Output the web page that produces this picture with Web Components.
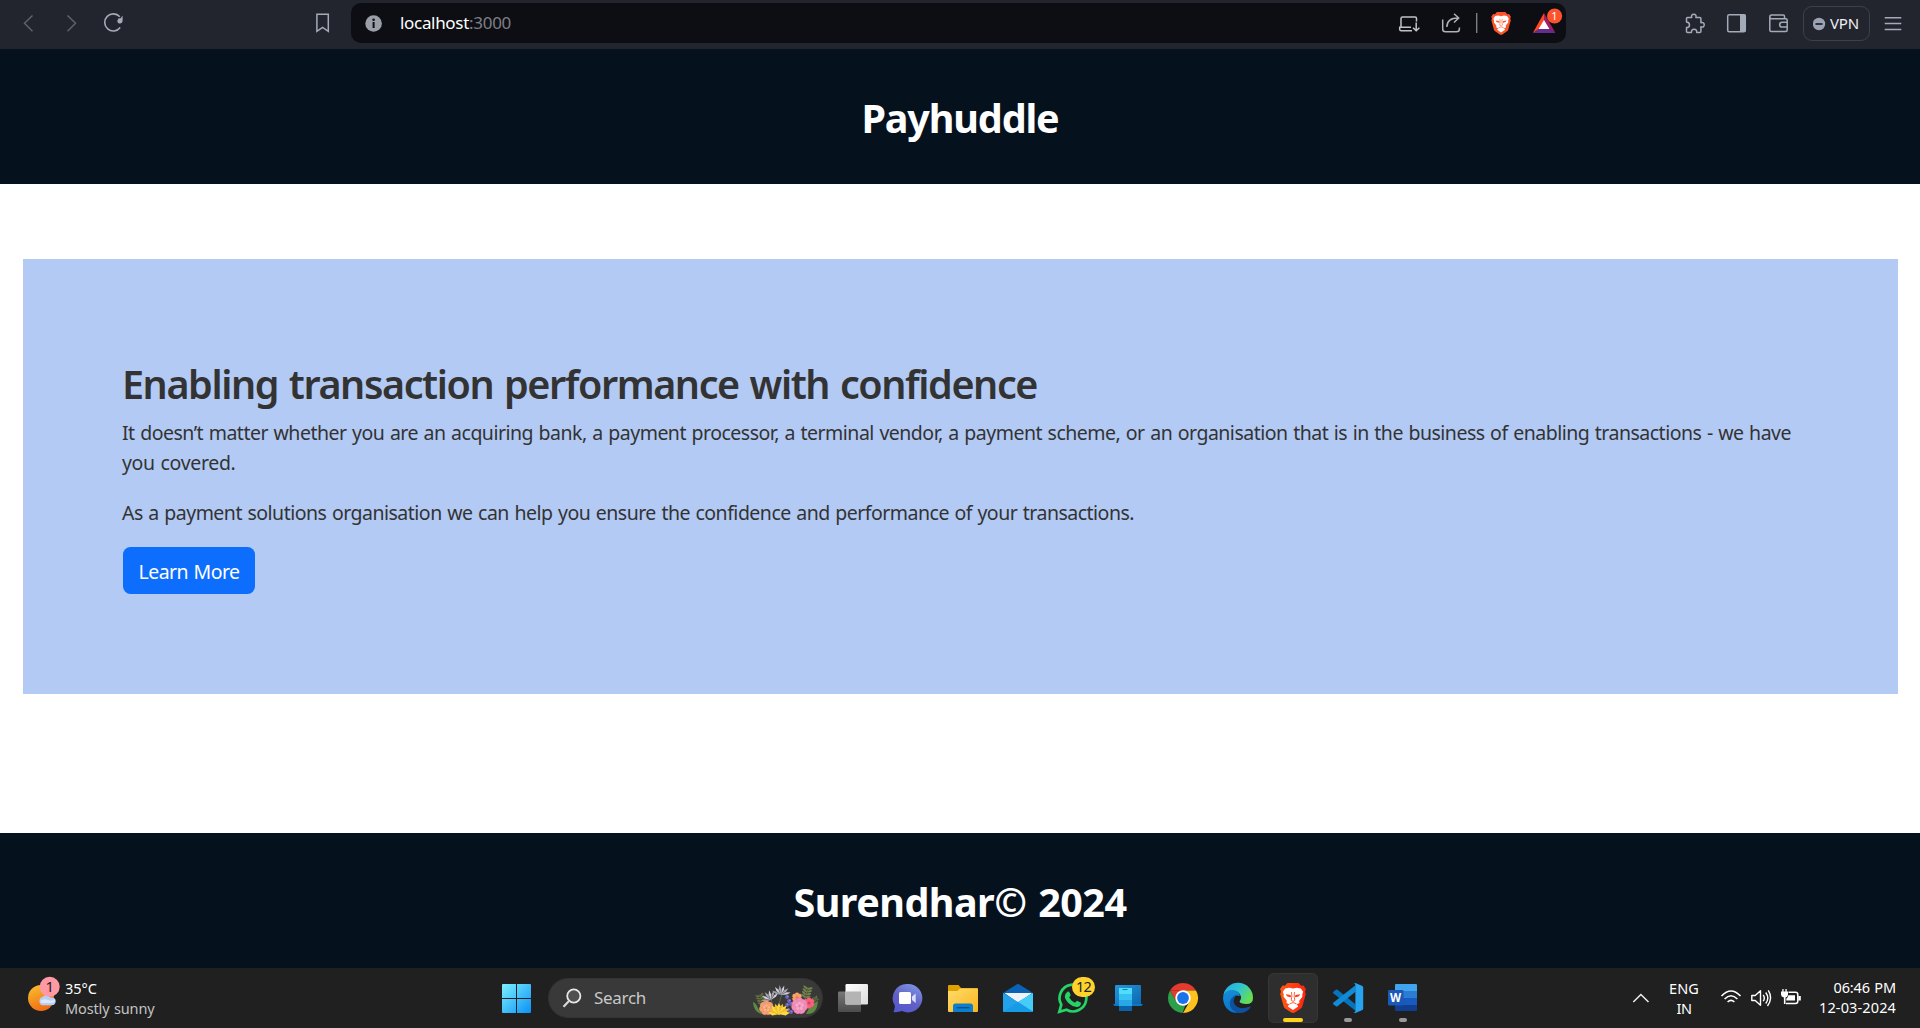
<!DOCTYPE html>
<html lang="en">
<head>
<meta charset="utf-8">
<title>Payhuddle</title>
<style>
html,body{margin:0;height:100%}
body{font-family:"Noto Sans","Open Sans",sans-serif;background:#fff;overflow:hidden}
</style>
</head>
<body>
<desktop-screen></desktop-screen>
<script>
const define = (name, markup, after) => customElements.define(name, class extends HTMLElement {
  connectedCallback() {
    if (this.shadowRoot) return;
    const t = document.createElement('template');
    t.innerHTML = typeof markup === 'function' ? markup(this) : markup;
    this.attachShadow({mode: 'open'}).append(t.content.cloneNode(true));
    if (after) after(this);
  }
});
// An icon cell: x and w give the cell's slice of the bar, y and h its rows.
const cell = (x, y, w, h, body) =>
  `<svg width="${w}" height="${h}" viewBox="${x} ${y} ${w} ${h}" fill="none" aria-hidden="true">${body}</svg>`;

const shield = 'M7.5 0h11l2.6 2.8 2.4-.3 2.4 3.6-.9 2.6.8 2.3-3.4 12.3q-.4 1.3-1.6 2.1l-5.6 3.9q-2.2 1.4-4.4 0l-5.6-3.9q-1.2-.8-1.6-2.1L.2 11l.8-2.3-.9-2.6L2.5 2.5l2.4.3z';
const face = 'M5.2 5.4l4-.7 3.800.9 3.800-.9 4 .7 2.400 3.400-.9 2.400.1 2.600-3.200 4 .3 2.300-2.600 1.200 1.300 2.200-5.200 3.600-5.200-3.600 1.300-2.200-2.600-1.200.3-2.300-3.200-4 .1-2.600-.9-2.400z';
const lion = (x, y, s, fill, line = fill) => `<g transform="translate(${x} ${y}) scale(${s})">
 <path d="${shield}" fill="${fill}"/><path d="${face}" fill="#fff"/>
 <path d="M5.800 11.300l4.600.7.8 1.500-1 .8-3.200-1zM20.200 11.300l-4.600.7-.8 1.500 1 .8 3.200-1z" fill="${line}"/>
 <path d="M11.500 9l.4 4-.7 4.200 1.800 1.300 1.800-1.300-.7-4.200.4-4M9.400 21l3.600-1.500 3.600 1.500" stroke="${line}" stroke-width=".8"/></g>`;

define('icon-back', `<style>:host{display:block}svg{display:block}</style>` +
  cell(22,0,13,49,`<path d="M32.500 15.500L24.500 23.300L32.500 31.200" stroke="#5d626c" stroke-width="1.500"/>`));
define('icon-forward', `<style>:host{display:block}svg{display:block}</style>` +
  cell(65,0,13,49,`<path d="M67.500 15.500L75.500 23.300L67.500 31.200" stroke="#5d626c" stroke-width="1.500"/>`));
define('icon-reload', `<style>:host{display:block}svg{display:block}</style>` +
  cell(103,0,22,49,`<path d="M119.800 16.800A8.600 8.600 0 1 0 120.200 27.600" stroke="#a3aab8" stroke-width="1.600"/><path d="M122.600 15.500v5.500a2.600 2.600 0 1 1-2-2.700z" fill="#a3aab8"/>`));
define('icon-bookmark', `<style>:host{display:block}svg{display:block}</style>` +
  cell(315,0,15,49,`<path d="M316.900 14.300h11.400v17l-5.700-4-5.700 4z" stroke="#a3aab8" stroke-width="1.500"/>`));

define('address-bar', `<style>
:host{display:flex;align-items:center;width:1215px;height:40px;background:#0d0e13;border-radius:10px;box-sizing:border-box}
svg{display:block;flex:none}
.url{margin-left:18px;font-size:17px;line-height:40px;height:40px;color:#fff;display:flex}
.port{color:#7d7f85}
.tools{margin-left:auto;display:flex}
.badge{font-size:11px;fill:#fff}
</style>
${cell(351,3,31,40,`<circle cx="373.600" cy="23.500" r="8.300" fill="#9b9ea6"/><circle cx="373.600" cy="19.800" r="1.300" fill="#0d0e13"/><path d="M373.600 22v6" stroke="#0d0e13" stroke-width="2"/>`)}
<div class="url"><fit-text w="69">localhost</fit-text><fit-text w="42" class="port">:3000</fit-text></div>
<div class="tools">
${cell(1390,3,40,40,`<path d="M1412 30.700h-10.800q-1.500 0-1.500-1.500v-2h11.300M1401 27v-8.500q0-1.500 1.500-1.500h12.500q1.500 0 1.500 1.500v3M1416.200 22.500v8M1413 27.700l3.200 3.100 3.200-3.100" stroke="#c0c2c7" stroke-width="1.500"/>`)}
${cell(1430,3,40,40,`<path d="M1442.700 19.500v9.500q0 2.800 2.800 2.800h11q2.900 0 2.900-2.800v-1.500" stroke="#b0b2b8" stroke-width="1.500"/><path d="M1446.800 27q.2-9 11.300-9M1454 13.800l4.700 4.200-4.700 4.500" stroke="#b0b2b8" stroke-width="1.500"/>`)}
${cell(1470,3,14,40,`<path d="M1476.700 13v20" stroke="#85878d" stroke-width="1.300"/>`)}
${cell(1484,3,40,40,lion(1491.200,12,.76,'#fb542b'))}
${cell(1524,3,42,40,`<path d="M1544 13L1532.800 33l11.200-7z" fill="#ff4724"/><path d="M1544 13l11.500 20-11.500-7z" fill="#9e1f63"/><path d="M1532.800 33h22.700l-6-4h-10.500z" fill="#662d91"/><path d="M1544 20l5.400 9h-10.800z" fill="#fff"/><circle cx="1554.600" cy="16" r="7.600" fill="#fb542b"/><text class="badge" x="1554.400" y="20" text-anchor="middle">1</text>`)}
</div>`);

define('vpn-button', `<style>
:host{display:flex;align-items:center;box-sizing:border-box;width:67px;height:35px;border:1px solid #3c404b;border-radius:9px;padding-left:9px;gap:4px;color:#eef0f4;font-size:15px}
svg{display:block}fit-text{margin-top:-2px}
</style>${cell(1813,16,13,14,`<circle cx="1819" cy="23" r="6.200" fill="#9da2b3"/><path d="M1815.500 23h7" stroke="#22252e" stroke-width="1.800"/>`)}<fit-text w="29">VPN</fit-text>`);

define('browser-bar', `<style>
:host{display:flex;align-items:center;height:49px;background:#22252d;box-sizing:border-box;flex:none}
svg{display:block;flex:none}
.nav{display:flex;width:351px;box-sizing:border-box;padding-left:22px}
icon-forward{margin-left:30px}icon-reload{margin-left:25px}icon-bookmark{margin-left:190px}
address-bar{margin-top:-3px;flex:none}
.right{display:flex;align-items:center;margin-left:110px}
vpn-button{margin:-2px 8px 0 5px;flex:none}
</style>
<div class="nav"><icon-back></icon-back><icon-forward></icon-forward><icon-reload></icon-reload><icon-bookmark></icon-bookmark></div>
<address-bar></address-bar>
<div class="right">
${cell(1676,0,41,49,`<path d="M1687.500 17.600h4.200q-.8-3.300 2.100-3.300t2.100 3.300h4q1 0 1 1v4.200q3.300-1 3.300 2t-3.300 2v4.600q0 1-1 1h-3.200q.2-3.200-2.600-3.200t-2.600 3.200h-4q-1 0-1-1v-3.800q3-.2 3-2.700t-3-2.800v-3.500q0-1 1-1z" stroke="#a3aab8" stroke-width="1.500" stroke-linejoin="round"/>`)}
${cell(1717,0,41,49,`<rect x="1727.700" y="14.700" width="17.600" height="17" rx="1.500" stroke="#a3aab8" stroke-width="1.500"/><path d="M1740 14.500h5.500v17.300h-5.500z" fill="#a3aab8"/>`)}
${cell(1758,0,40,49,`<path d="M1784.500 18.800v-2.500q0-1.300-1.300-1.300h-11.500q-1.900 0-1.900 1.900t1.900 1.900h14q1.500 0 1.500 1.500v9.700q0 1.500-1.500 1.500h-14.400q-1.500 0-1.500-1.500v-13M1787.500 22.300h-5.500q-2.300 0-2.300 2.400t2.300 2.400h5.500" stroke="#a3aab8" stroke-width="1.500"/>`)}
<vpn-button></vpn-button>
${cell(1878,0,30,49,`<path d="M1884.700 17.700h16.600M1884.700 23.500h16.600M1884.700 29.400h16.600" stroke="#a3aab8" stroke-width="1.500"/>`)}
</div>`);

define('page-band', `<style>
:host{display:flex;align-items:center;justify-content:center;box-sizing:border-box;height:135px;padding-top:2px;background:#05121e;color:#fff;flex:none}
h1{margin:0;font-size:39.500px;line-height:48px;font-weight:700}
</style><h1><slot></slot></h1>`);

define('learn-button', `<style>
:host{display:inline-flex;justify-content:center;box-sizing:border-box;width:132px;height:47px;border-radius:7.500px;background:#0d6efd;color:#fff;font-size:19.500px;line-height:30px;padding-top:10px}
</style><fit-text w="101"><slot></slot></fit-text>`);

define('hero-panel', `<style>
:host{display:flex;flex-direction:column;align-items:flex-start;box-sizing:border-box;margin:75px 22px 0 23px;height:435px;padding:101px 100px 99px 99px;background:#b2caf4;color:#333;font-size:19.500px;line-height:30px}
h2{margin:0 0 10px;font-size:39.500px;line-height:48px;font-weight:560}
p{margin:0 0 20px}
fit-text{display:block}
learn-button{margin:-1px 0 0 1px}
</style>
<h2><fit-text w="915">Enabling transaction performance with confidence</fit-text></h2>
<p><fit-text w="1669">It doesn’t matter whether you are an acquiring bank, a payment processor, a terminal vendor, a payment scheme, or an organisation that is in the business of enabling transactions - we have</fit-text>
<fit-text w="113.500">you covered.</fit-text></p>
<p><fit-text w="1012">As a payment solutions organisation we can help you ensure the confidence and performance of your transactions.</fit-text></p>
<learn-button>Learn More</learn-button>`);

define('weather-widget', `<style>
:host{display:flex;height:60px;padding-left:24px;font-size:14.500px;color:#fff}
svg{display:block}.t{padding-top:10px;line-height:20px;margin-left:3px}.s{color:#c3c3c3}.b{font-size:15px;fill:#222}
fit-text{display:block}
</style>
${cell(24,968,38,60,`<defs><linearGradient id="s" x2=".4" y2="1"><stop stop-color="#f7c331"/><stop offset="1" stop-color="#f26f15"/></linearGradient></defs>
<circle cx="41" cy="998" r="13" fill="url(#s)"/><path d="M43 1005.300a4.200 4.200 0 0 1-.5-8.200q2.500-3 5.500-1t4 1.500q4 .5 3.700 4t-4 3.700z" fill="#b7d0f7"/><path d="M40 1001q4-3 8-1t7-1q.5 4-4 4h-8q-2.500 0-3-2z" fill="#dce9fc"/><circle cx="49.700" cy="986.700" r="10" fill="#ff99a4"/><text class="b" x="49.800" y="992" text-anchor="middle">1</text>`)}
<div class="t"><fit-text w="32">35°C</fit-text><fit-text class="s" w="89.500">Mostly sunny</fit-text></div>`);

// A bloom is a ring of petals round its centre.
const bloom = (x, y, r, n, c, mid, thin = .32) => `<circle cx="${x}" cy="${y}" r="${r * .8}" fill="${c}"/>` + Array.from({length: n}, (_, i) =>
  `<ellipse cx="${x}" cy="${y - r * .62}" rx="${r * thin}" ry="${r * .4}" fill="${c}" stroke="${mid}" stroke-opacity=".45" stroke-width=".5" transform="rotate(${i * 360 / n} ${x} ${y})"/>`).join('') + `<circle cx="${x}" cy="${y}" r="${r * .18}" fill="${mid}"/>`;
const fern = (x, y, a, k, c) => `<g transform="translate(${x} ${y}) rotate(${a}) scale(${k})"><path d="M0 0V-13" stroke="${c}" stroke-width=".8"/>` +
  [-3,-6,-9,-12].map(v => `<ellipse cx="-2.600" cy="${v}" rx="2.700" ry="1.100" fill="${c}" transform="rotate(28 -2.600 ${v})"/><ellipse cx="2.600" cy="${v}" rx="2.700" ry="1.100" fill="${c}" transform="rotate(-28 2.600 ${v})"/>`).join('') + '</g>';
const spray = (x, y, r, turn) => [-70,-42,-14,14,42,70].map((a, i) => `<path d="M${x} ${y}l-1.200-${r * .6} 1.200-${r * .4} 1.200 ${r * .4}z" fill="${i % 2 ? '#d0ced6' : '#a5a2b3'}" transform="rotate(${a + turn} ${x} ${y})"/>`).join('');

define('search-pill', `<style>
:host{display:flex;align-items:center;box-sizing:border-box;width:275px;height:40px;margin-top:10px;border-radius:20px;background:#393939;border:1px solid #333;color:#c8c8c8;font-size:17px;line-height:38px;flex:none;padding-left:11px}
svg{display:block;flex:none}fit-text{margin-left:10px;height:38px}.f{margin-left:auto;margin-right:2px}
</style>
${cell(560,978,24,38,`<circle cx="573.800" cy="995" r="6.600" fill="#505050" stroke="#e8e8e8" stroke-width="1.800"/><path d="M569 1000l-5.500 5.700" stroke="#d8d8d8" stroke-width="2.200"/>`)}
<fit-text w="52">Search</fit-text>
<div class="f">${cell(751,979,69,38,
 `<path d="M753 1002q3 1 5 6t6 6q-10 0-11-12zM818 1001q-8 3-12 13 11 1 12-13z" fill="#5c8a43"/>` +
 fern(763,1005,-20,.85,'#66713d') + fern(805,999,14,.95,'#71834a') + fern(812,1001,60,.5,'#637b3c') +
 `<path d="M774 1010l-3-11M777 1010l5-16" stroke="#627447" stroke-width=".8"/>` +
 spray(771,1000,10,-25) + spray(781,995,10,5) +
 bloom(797,997.500,5,6,'#f5a66f','#d9733a',.42) + bloom(809,1003,5.500,6,'#f4667f','#d63558',.44) +
 [[788,1010],[787,1005],[789,1001],[787,997],[791,1012],[791,1004]].map(([x,y]) => `<circle cx="${x}" cy="${y}" r="2" fill="#6d5fb8"/><circle cx="${x+.7}" cy="${y-.7}" r=".9" fill="#9185d0"/>`).join('') +
 bloom(766.500,1008,7.200,7,'#f5a074','#e0763f',.42) + bloom(766.500,1008,4,5,'#fab88e','#e0763f',.42) +
 bloom(799.500,1006,8,7,'#f08fba','#da649a',.44) + bloom(799.500,1006,4.600,5,'#f8abcb','#da649a',.44) +
 [-84,-63,-42,-21,0,21,42,63,84].map((a, i) => `<path d="M779 1015l-2.200-7.500 2.200-4.500 2.200 4.500z" fill="${i % 2 ? '#efbe24' : '#fcd947'}" transform="rotate(${a} 779 1014)"/>`).join(''))}</div>`);

const apps = {
 start: cell(489,968,55,60,`<defs><linearGradient id="w" gradientUnits="userSpaceOnUse" x1="502" y1="984" x2="531" y2="1013"><stop stop-color="#7df0fd"/><stop offset="1" stop-color="#0a91f7"/></linearGradient></defs><path d="M502 985q0-1 1-1h13v14h-14zM517 984h13q1 0 1 1v13h-14zM502 999h14v14h-13q-1 0-1-1zM517 999h14v13q0 1-1 1h-13z" fill="url(#w)"/>`),
 task: cell(826,968,55,60,`<defs><linearGradient id="a" x2="1" y2="1"><stop stop-color="#fff"/><stop offset="1" stop-color="#ddd"/></linearGradient><linearGradient id="b" x2="0" y2="1"><stop stop-color="#777"/><stop offset="1" stop-color="#4c4c4c"/></linearGradient></defs><rect x="838" y="991.500" width="23" height="20.500" rx="1.200" fill="url(#b)"/><rect x="845.500" y="984" width="22.500" height="20.500" rx="1.200" fill="url(#a)"/><path d="M845.500 991.500h15.500v13h-14.500q-1 0-1-1z" fill="#b4b4b4"/>`),
 chat: cell(881,968,55,60,`<defs><linearGradient id="c" x1=".2" y1=".95" x2=".7" y2="0"><stop stop-color="#5558d0"/><stop offset=".45" stop-color="#6260c4"/><stop offset="1" stop-color="#7b93e3"/></linearGradient></defs><path d="M908 984a14.200 14.200 0 1 1-6 27q-3 1.300-8.500 1.100 1.500-3.500 1.300-6.500A14.200 14.200 0 0 1 908 984z" fill="url(#c)"/><rect x="899" y="992" width="12" height="12" rx="1.500" fill="#fff"/><path d="M912 996.500l3.700-3v9.500l-3.700-3z" fill="#dcdcff"/>`),
 files: cell(936,968,55,60,`<defs><linearGradient id="d" x2="1" y2="1"><stop stop-color="#ffdc6b"/><stop offset="1" stop-color="#fbb51e"/></linearGradient></defs><path d="M948 986q0-1 1-1h9.500l2.500 3h16q1 0 1 1v6h-30z" fill="#dfa000"/><path d="M948 991h9.500l2.500-2.500h17q1 0 1 1v21.500q0 1-1 1h-28q-1 0-1-1z" fill="url(#d)"/><path d="M953 1012v-6q0-2.500 2.500-2.500h14.800q2.700 0 2.700 2.500v6z" fill="#0c7fcc"/><path d="M956.500 1007.700h13" stroke="#07508e" stroke-width="1.300"/>`),
 mail: cell(991,968,55,60,`<path d="M1003 993l14-8.700q1-.6 2 0l14 8.700v5h-30z" fill="#0b62b5"/><path d="M1004.500 993h27.500l-13.500 10z" fill="#eff3f7"/><path d="M1003 993l15 9 15-9v18q0 1-1 1h-28q-1 0-1-1z" fill="#21a2eb"/><path d="M1018 1002l15-9v18.500z" fill="#45cdf7"/><path d="M1003.400 1011.700L1018 1002l14.600 9.700q-.4.300-1 .3h-27.600z" fill="#169be7"/>`),
 whats: cell(1046,968,55,60,`<path d="M1059.300 1011.800l2-7.200a13.400 13.400 0 1 1 5.300 5.200z" stroke="#25d366" stroke-width="2.700"/><path d="M1067.500 991.800q1.500-.7 2 .7l1.200 2.600-1.500 2.500q2.300 4 5.800 5.200l2-2.100 4 2q0 4-4 4.300-4 .2-8-3.600t-4.200-7q.2-3 2.700-4.600z" fill="#25d366"/><rect x="1072" y="977" width="23" height="20" rx="10" fill="#ffd32c"/><text x="1083.500" y="992.300" text-anchor="middle" font-size="14.500" letter-spacing="-.8" fill="#222">12</text>`),
 phone: cell(1101,968,55,60,`<defs><linearGradient id="e" x2="1" y2="1"><stop stop-color="#2397df"/><stop offset="1" stop-color="#0c65ad"/></linearGradient></defs><rect x="1115" y="985" width="26" height="20" rx="1.200" fill="url(#e)"/><path d="M1113 1004h30l-1.500 2h-27z" fill="#0c77c2"/><path d="M1119 988h13v23h-13z" fill="#28a8e5"/><path d="M1119 988h13v6h-13z" fill="#50ddfb"/><path d="M1119 994h13v6h-13z" fill="#37c1f0"/><path d="M1119 1006h13v5h-13z" fill="#0a63aa"/><path d="M1122.500 989.500h5" stroke="#087eaa"/>`),
 chrome: cell(1156,968,55,60,`<path d="M1170 990.500A15 15 0 0 1 1196 990.500h-13z" fill="#e33b2e"/><path d="M1170 990.500l6.500 11.300q3 5 9 3L1182.500 1013A15 15 0 0 1 1170 990.500z" fill="#2d9f48"/><path d="M1183 990.500h13a15 15 0 0 1-13 22.500l6.500-11.300z" fill="#fcc21d"/><path d="M1170 990.500l6.500 11.300 6.500-3.800h7l-7-7.500z" fill="#e33b2e"/><circle cx="1183" cy="998" r="7.700" fill="#fff"/><circle cx="1183" cy="998" r="5.900" fill="#1a73e8"/>`),
 edge: cell(1211,968,55,60,`<defs><linearGradient id="g" x2="1" y2=".5"><stop stop-color="#20a9e8"/><stop offset=".55" stop-color="#32c5cf"/><stop offset="1" stop-color="#65dd55"/></linearGradient><linearGradient id="h" x2=".2" y2="1"><stop stop-color="#188fd7"/><stop offset="1" stop-color="#0875ca"/></linearGradient></defs><path d="M1223.300 996A14.900 14.900 0 0 1 1253 998q0 6-6.500 6-6.500-.5-7-2.500 2-2 1.500-5-2-6-9-6-5.500.2-8.700 5.500z" fill="url(#g)"/><path d="M1223 998q1-8 9-8 7 .5 8 6-7-2-7.500 4 .5 8 9.500 10.500-3 2.500-7 2.300Q1224 1011 1223 998z" fill="url(#h)"/><path d="M1236 995.500q-4.500 6-.5 10 4 4.500 14 1.300 1.500-.8 1 .6-4.500 6-12 5.600-9-2.500-8.800-10 .8-6 6.300-7.500z" fill="#0e51a0"/>`),
 brave: cell(1266,968,55,60,`<defs><linearGradient id="i"><stop stop-color="#ff5a13"/><stop offset="1" stop-color="#ff2510"/></linearGradient></defs><rect x="1268.500" y="973.500" width="49" height="49" rx="5" fill="#2e2e2e" stroke="#373737"/>${lion(1280,983,1,'url(#i)','#ff3c12')}<rect x="1283" y="1018" width="20" height="4" rx="2" fill="#ffd321"/>`),
 code: cell(1321,968,55,60,`<path d="M1333.400 991.800l2.500-2.100q.8-.5 1.600 0l18 14.500v6.500l-22-17.200q-1-.8-.1-1.700z" fill="#0873bd"/><path d="M1333.400 1004.200l2.500 2.100q.8.500 1.600 0l18-14.500v-6.500l-22 17.200q-1 .8-.1 1.700z" fill="#118bd5"/><path d="M1355.400 983l7 3q.8.600.8 1.500v21q0 1-.8 1.500l-7 3q-1.200.2-2-1 1.800.7 2-1v-26q-.2-1.700-2-1z" fill="#27a4f0"/><rect x="1344" y="1018" width="8" height="4" rx="2" fill="#999"/>`),
 word: cell(1376,968,55,60,`<path d="M1395 985q0-1 1-1h20q1 0 1 1v6h-22z" fill="#41a5ee"/><path d="M1395 991h22v7h-22z" fill="#2b7cd3"/><path d="M1395 998h22v7h-22z" fill="#185abd"/><path d="M1395 1005h22v5q0 1-1 1h-20q-1 0-1-1z" fill="#103f91"/><rect x="1388" y="990" width="15.500" height="15.500" rx="1.200" fill="#1b58b8"/><text x="1395.500" y="1002" text-anchor="middle" font-size="11.500" font-weight="700" fill="#fff">W</text><rect x="1399" y="1018" width="8" height="4" rx="2" fill="#999"/>`)
};
define('task-app', el => `<style>:host{display:block;flex:none}svg{display:block}</style>${apps[el.getAttribute('name')]}`);

define('system-tray', `<style>
:host{display:flex;margin-left:auto;height:60px;color:#fff;font-size:14.500px;line-height:20px}
svg{display:block}fit-text{display:block}
.l,.c{display:flex;flex-direction:column;padding-top:10px}.l{align-items:center;width:60px}.c{align-items:flex-end;width:86px;padding-top:9px;padding-right:24px}
</style>
${cell(1624,968,30,60,`<path d="M1633.300 1002l7.600-7.500 7.600 7.500" stroke="#eee" stroke-width="1.500"/>`)}
<div class="l"><fit-text w="30">ENG</fit-text><fit-text w="15">IN</fit-text></div>
${cell(1714,968,96,60,`<g stroke="#fff" stroke-width="1.600"><path d="M1721.500 996q9.500-10 19 0M1724.600 999q6.400-6.600 12.800 0M1727.600 1002q3.400-3.400 6.800 0"/><path d="M1751.800 995.500h3.400l5.300-4.700v14.400l-5.300-4.700h-3.400zM1763.200 994.800q2.200 3.200 0 6.400M1765.700 992.500q4.200 5.500 0 11M1768.300 990.300q5 7.700-.8 15.700" stroke-width="1.400" stroke-linejoin="round"/><path d="M1788.500 992.300h7q2.300 0 2.300 2.200v6.700q0 2.200-2.300 2.200h-9.500" stroke-width="1.500"/></g><path d="M1798.300 996h2.500v4.500h-2.500zM1788.300 995.300h6.700v5.300h-8.700v-1.800q2-1 2-3.500zM1781 991.500h1.300v-2.500h1.300v2.500h1.800v-2.500h1.300v2.500h1.300v3q0 2.300-2.500 3v6.500h-1.600v-6.500q-2.900-.7-2.900-3z" fill="#fff"/>`)}
<div class="c"><fit-text w="62.500">06:46 PM</fit-text><fit-text w="77">12-03-2024</fit-text></div>`);

define('task-bar', `<style>
:host{display:flex;height:60px;background:#202020;flex:none}
.left{width:489px}search-pill{margin-left:4px;margin-right:3px}
</style>
<div class="left"><weather-widget></weather-widget></div>
<task-app name="start"></task-app><search-pill></search-pill>
${['task','chat','files','mail','whats','phone','chrome','edge','brave','code','word'].map(n => `<task-app name="${n}"></task-app>`).join('')}
<system-tray></system-tray>`);

define('desktop-screen', `<style>
:host{display:flex;flex-direction:column;height:1028px;width:1920px}
main{flex:1;min-height:0;background:#fff;display:flow-root}
</style>
<browser-bar></browser-bar>
<page-band><fit-text w="197">Payhuddle</fit-text></page-band>
<main><hero-panel></hero-panel></main>
<page-band><fit-text w="333">Surendhar© 2024</fit-text></page-band>
<task-bar></task-bar>`);

// Tracks its text so that one line takes exactly w pixels.
define('fit-text', `<style>:host{display:inline-block;white-space:nowrap}span{display:inline-block;word-spacing:.05em}</style><span><slot></slot></span>`, el => {
  const span = el.shadowRoot.querySelector('span');
  const slot = el.shadowRoot.querySelector('slot');
  const text = slot.assignedNodes({flatten: true}).map(n => n.textContent).join('').trim();
  const natural = span.getBoundingClientRect().width;
  span.style.letterSpacing = (el.getAttribute('w') - natural) / text.length + 'px';
});
</script>
</body>
</html>
